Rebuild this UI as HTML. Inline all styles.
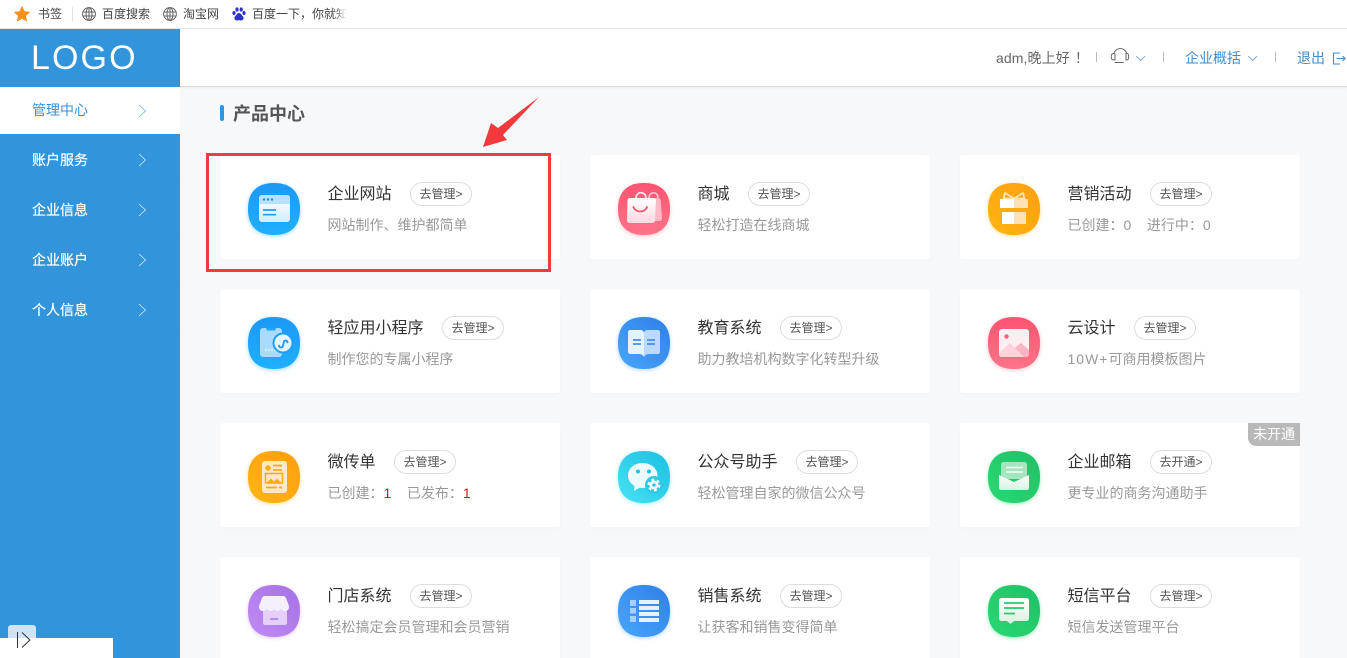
<!DOCTYPE html>
<html lang="zh">
<head>
<meta charset="utf-8">
<title>产品中心</title>
<style>
*{box-sizing:border-box;margin:0;padding:0}
html,body{width:1347px;height:658px;overflow:hidden;background:#f7f8fa}
body{position:relative;font-family:"Liberation Sans","Noto Sans CJK SC",sans-serif;color:#333}
.abs,.bm,.card,.menu,.hd{position:absolute}
.bar{position:absolute;left:0;top:0;width:1347px;height:29px;background:#fff;border-bottom:1px solid #e4e4e4}
.bm{font-size:12px;line-height:16px;top:6px;color:#444;white-space:nowrap}
.side{position:absolute;left:0;top:29px;width:180px;height:629px;background:#3295db}
.logo{position:absolute;left:31px;top:9px;font-size:34px;line-height:40px;letter-spacing:2.1px;color:#fff}
.menu{left:0;width:180px;height:50px;border-bottom:1px solid #3192d8;font-size:14px;line-height:52px;padding-left:32px;color:#fff;-webkit-text-stroke:.2px #fff}
.menu svg{position:absolute;left:138px;top:19px}
.menu.on{background:#fff;color:#3a90d4;-webkit-text-stroke:0;border:0}
.head{position:absolute;left:180px;top:29px;width:1167px;height:58px;background:#fff;border-bottom:1px solid #dcdcdc;box-shadow:0 1px 2px rgba(0,0,0,.05)}
.hd{font-size:14px;line-height:20px;top:48px;white-space:nowrap;color:#666}
.hd.b{color:#3f8ccb}
.sep{position:absolute;top:52px;width:1px;height:10px;background:#bbb}
.card{width:340px;height:104px;background:#fff;border-radius:3px;box-shadow:0 2px 6px rgba(0,0,0,.02)}
.card>svg{position:absolute;left:28px;top:28px}
.t{position:absolute;left:108px;top:27px;height:24px;display:flex;align-items:center;font-size:16px;line-height:24px;color:#333;white-space:nowrap}
.n{position:relative;left:-.5px;top:1px}
.btn{display:inline-block;margin-left:18px;width:62px;height:24px;border:1px solid #ddd;border-radius:12px;font-size:12px;line-height:23px;text-align:center;color:#555}
.s{position:absolute;left:107.500px;top:60px;font-size:14px;line-height:20px;color:#999;white-space:pre}
.s i{font-style:normal;color:#d01c10}
.tag{position:absolute;right:0;top:0;width:52px;height:23px;background:#b9b9b9;border-radius:0 0 0 8px;font-size:14px;line-height:23px;text-align:center;color:#fff}
.sb{filter:drop-shadow(0 1px 2px rgba(30,176,255,.45))}
.sr{filter:drop-shadow(0 1px 2px rgba(255,116,136,.45))}
.sy{filter:drop-shadow(0 1px 2px rgba(255,182,18,.45))}
.sn{filter:drop-shadow(0 1px 2px rgba(72,166,251,.45))}
.sc{filter:drop-shadow(0 1px 2px rgba(71,226,244,.45))}
.sg{filter:drop-shadow(0 1px 2px rgba(42,216,115,.45))}
.sp{filter:drop-shadow(0 1px 2px rgba(193,139,246,.45))}
</style>
</head>
<body>
<div class="bar"></div>
<svg class="abs" style="left:13px;top:5px" width="18" height="18" viewBox="0 0 18 18"><path d="M9 .8l2.500 5.400 5.800.7-4.300 4 1.200 5.800L9 13.800l-5.200 2.900L5 10.900.7 6.900l5.800-.7z" fill="#f5901e"/></svg>
<div class="bm" style="left:38px">书签</div>
<div class="abs" style="left:72px;top:7px;width:1px;height:15px;background:#e2e2e2"></div>
<svg class="abs" style="left:82px;top:7px" width="14" height="14" viewBox="0 0 14 14" fill="none" stroke="#666"><circle cx="7" cy="7" r="6.400"/><ellipse cx="7" cy="7" rx="3" ry="6.400"/><path d="M1 5h12M1 9h12M7 .6v12.800"/></svg>
<div class="bm" style="left:102px">百度搜索</div>
<svg class="abs" style="left:163px;top:7px" width="14" height="14" viewBox="0 0 14 14" fill="none" stroke="#666"><circle cx="7" cy="7" r="6.400"/><ellipse cx="7" cy="7" rx="3" ry="6.400"/><path d="M1 5h12M1 9h12M7 .6v12.800"/></svg>
<div class="bm" style="left:183px">淘宝网</div>
<svg class="abs" style="left:232px;top:7px" width="14" height="14" viewBox="0 0 14 14" fill="#2b32c8"><ellipse cx="2" cy="6" rx="1.600" ry="2"/><ellipse cx="5" cy="2.500" rx="1.600" ry="2.100"/><ellipse cx="9.200" cy="2.500" rx="1.600" ry="2.100"/><ellipse cx="12" cy="6" rx="1.600" ry="2"/><path d="M7 6c2 0 2.500 2 4 3.500 1.500 2 0 4-2 4-1 0-1.300-.4-2-.4s-1 .4-2 .4c-2 0-3.500-2-2-4C4.500 8 5 6 7 6z"/></svg>
<div class="bm" style="left:252px;width:96px;overflow:hidden">百度一下，你就知道</div>
<div class="abs" style="left:334px;top:5px;width:15px;height:18px;background:linear-gradient(90deg,rgba(255,255,255,0),#fff 85%)"></div>

<div class="side">
  <div class="logo">LOGO</div>
</div>
<div class="menu on" style="top:87px;height:47px;line-height:46px"><span>管理中心</span><svg style="top:17px" width="9" height="14" viewBox="0 0 9 14" fill="none" stroke="#6fb0e0" stroke-width=".8"><path d="M1 1l6.500 6L1 13"/></svg></div>
<div class="menu" style="top:134px">账户服务<svg width="9" height="14" viewBox="0 0 9 14" fill="none" stroke="#d6eaf8" stroke-width=".8"><path d="M1 1l6.500 6L1 13"/></svg></div>
<div class="menu" style="top:184px">企业信息<svg width="9" height="14" viewBox="0 0 9 14" fill="none" stroke="#d6eaf8" stroke-width=".8"><path d="M1 1l6.500 6L1 13"/></svg></div>
<div class="menu" style="top:234px">企业账户<svg width="9" height="14" viewBox="0 0 9 14" fill="none" stroke="#d6eaf8" stroke-width=".8"><path d="M1 1l6.500 6L1 13"/></svg></div>
<div class="menu" style="top:284px">个人信息<svg width="9" height="14" viewBox="0 0 9 14" fill="none" stroke="#d6eaf8" stroke-width=".8"><path d="M1 1l6.500 6L1 13"/></svg></div>
<div class="abs" style="left:8px;top:625px;width:28px;height:16px;background:#cfe3f5;border-radius:3px 3px 0 0"></div>
<div class="abs" style="left:0;top:638px;width:113px;height:20px;background:#fff"></div>
<svg class="abs" style="left:16px;top:631px" width="16" height="18" viewBox="0 0 16 18" fill="none" stroke="#222" stroke-width=".9"><path d="M1.500 1v16M6 1.500L14 9 6 16.500"/></svg>

<div class="head"></div>
<div class="hd" style="left:996px;letter-spacing:.1px">adm,晚上好<span style="margin-left:5px">！</span></div>
<div class="sep" style="left:1096px"></div>
<svg class="abs" style="left:1110px;top:46px" width="20" height="18" viewBox="0 0 20 18" fill="none" stroke="#666" stroke-width="1"><path d="M4 7.500a6.500 6.500 0 0 1 12.500-.5"/><path d="M4 7.500H3.500a2.200 2.200 0 0 0-2.200 2.200v2a2.200 2.200 0 0 0 2.200 2.200H5V8zM16 7.500h.8a1.800 1.800 0 0 1 1.800 1.800v2.800a1.800 1.800 0 0 1-1.800 1.800H16z"/><path d="M5 16.500h8.500" stroke-linecap="round"/></svg>
<svg class="abs" style="left:1135px;top:55px" width="11" height="7" viewBox="0 0 11 7" fill="none" stroke="#7fa9cc" stroke-width=".9"><path d="M1 1l4.500 4.500L10 1"/></svg>
<div class="sep" style="left:1163px"></div>
<div class="hd b" style="left:1185px">企业概括</div>
<svg class="abs" style="left:1247px;top:55px" width="11" height="7" viewBox="0 0 11 7" fill="none" stroke="#7fa9cc" stroke-width=".9"><path d="M1 1l4.500 4.500L10 1"/></svg>
<div class="sep" style="left:1275px"></div>
<div class="hd b" style="left:1297px">退出</div>
<svg class="abs" style="left:1332px;top:52px" width="14" height="13" viewBox="0 0 14 13" fill="none" stroke="#3f8ccb" stroke-width="1.100"><path d="M8 1H1.500v11H8M4.500 6.500H13M10.500 4l2.600 2.500L10.500 9"/></svg>

<div class="abs" style="left:220px;top:105px;width:4px;height:16px;background:#3295db;border-radius:2px"></div>
<div class="abs" style="left:233px;top:101px;font-size:18px;line-height:26px;font-weight:bold;color:#555">产品中心</div>

<svg width="0" height="0" style="position:absolute">
<defs>
<linearGradient id="gb" x1="0" y1="0" x2="0" y2="1"><stop offset="0" stop-color="#1c98f5"/><stop offset="1" stop-color="#1eb0ff"/></linearGradient>
<linearGradient id="gr" x1="0" y1="0" x2="0" y2="1"><stop offset="0" stop-color="#fb5470"/><stop offset="1" stop-color="#ff7488"/></linearGradient>
<linearGradient id="gy" x1="1" y1="0" x2="0" y2="1"><stop offset="0" stop-color="#fd9e10"/><stop offset="1" stop-color="#ffb612"/></linearGradient>
<linearGradient id="gn" x1="1" y1="0" x2="0" y2="1"><stop offset="0" stop-color="#2f7fe6"/><stop offset="1" stop-color="#48a6fb"/></linearGradient>
<linearGradient id="gc" x1="1" y1="0" x2="0" y2="1"><stop offset="0" stop-color="#1cc0e2"/><stop offset="1" stop-color="#47e2f4"/></linearGradient>
<linearGradient id="gg" x1="1" y1="0" x2="0" y2="1"><stop offset="0" stop-color="#1fc066"/><stop offset="1" stop-color="#2ad873"/></linearGradient>
<linearGradient id="gp" x1="1" y1="0" x2="0" y2="1"><stop offset="0" stop-color="#a572e2"/><stop offset="1" stop-color="#c18bf6"/></linearGradient>
<linearGradient id="wb" x1="0" y1="0" x2="0" y2="1"><stop offset="0" stop-color="#fff"/><stop offset="1" stop-color="#d6ecff"/></linearGradient>
<linearGradient id="wr" x1="0" y1="0" x2="0" y2="1"><stop offset="0" stop-color="#fff"/><stop offset="1" stop-color="#fcd9e0"/></linearGradient>
<linearGradient id="wg" x1="0" y1="0" x2="0" y2="1"><stop offset="0" stop-color="#fff"/><stop offset="1" stop-color="#d5f3e1"/></linearGradient>
<path id="sq" d="M26 0C43 0 52 9 52 26C52 43 43 52 26 52C9 52 0 43 0 26C0 9 9 0 26 0Z"/>
</defs>
</svg>

<!-- Row 1 -->
<div class="card" style="left:220px;top:155px">
  <svg width="52" height="52" viewBox="0 0 52 52" overflow="visible"><use href="#sq" fill="url(#gb)" class="sb"/><rect x="11" y="12" width="31" height="27" rx="3" fill="url(#wb)"/><path d="M14 12h25a3 3 0 0 1 3 3v6H11v-6a3 3 0 0 1 3-3z" fill="#b9e0ff"/><circle cx="16" cy="16.500" r="1.200" fill="#1c8fe8"/><circle cx="20" cy="16.500" r="1.200" fill="#1c8fe8"/><circle cx="24" cy="16.500" r="1.200" fill="#1c8fe8"/><path d="M15 27h13M15 31.700h13" stroke="#1e9cf5" stroke-width="1.700"/></svg>
  <div class="t"><span class="n">企业网站</span><span class="btn">去管理&gt;</span></div>
  <div class="s">网站制作、维护都简单</div>
</div>
<div class="card" style="left:590px;top:155px">
  <svg width="52" height="52" viewBox="0 0 52 52" overflow="visible"><use href="#sq" fill="url(#gr)" class="sr"/><path d="M30 15h10c1.500 0 2.500 1 2.700 2.500L44 35c0 2-1 3-3 3H34z" fill="#fdb9c5"/><path d="M31 15c0-7 9-7 9 0" fill="none" stroke="#fdc9d2" stroke-width="1.500"/><path d="M11.500 15h24c1.500 0 2.500 1 2.500 2.500L37 37c0 2-1 3-3 3H12c-2 0-3-1-3-3l.5-19.500c0-1.500 1-2.500 2-2.500z" fill="url(#wr)"/><path d="M18 15c0-7 10-7 10 0" fill="none" stroke="#fde6ea" stroke-width="1.700"/><path d="M15.500 24c2 6 11.500 6 13.500 0" fill="none" stroke="#f8526c" stroke-width="1.800" stroke-linecap="round"/></svg>
  <div class="t"><span class="n">商城</span><span class="btn">去管理&gt;</span></div>
  <div class="s">轻松打造在线商城</div>
</div>
<div class="card" style="left:960px;top:155px">
  <svg width="52" height="52" viewBox="0 0 52 52" overflow="visible"><use href="#sq" fill="url(#gy)" class="sy"/><path d="M26 15.500L17 10l-1.500 5.500zM26 15.500L35 10l1.500 5.500z" fill="none" stroke="#ffe2b0" stroke-width="1.800" stroke-linejoin="round"/><rect x="12" y="16" width="14" height="9" fill="#fff"/><rect x="26" y="16" width="14" height="9" fill="#ffe2b3"/><rect x="14" y="29" width="12" height="12" fill="#fff"/><rect x="26" y="29" width="12" height="12" fill="#ffe2b3"/></svg>
  <div class="t"><span class="n">营销活动</span><span class="btn">去管理&gt;</span></div>
  <div class="s">已创建：0    进行中：0</div>
</div>

<!-- Row 2 -->
<div class="card" style="left:220px;top:289px">
  <svg width="52" height="52" viewBox="0 0 52 52" overflow="visible"><use href="#sq" fill="url(#gb)" class="sb"/><rect x="12" y="11" width="22" height="29" rx="3" fill="#a8dbff"/><path d="M18 11h10l-1 2.500h-8z" fill="#1ea5fb"/><path d="M17 33h12" stroke="#d4eeff" stroke-width="2" stroke-dasharray="2 1"/><circle cx="35" cy="26" r="10.500" fill="#1ea0f7"/><circle cx="35" cy="26" r="8.500" fill="#e5f4ff"/><path d="M31 28.500c0 2.500 3.500 2.500 4 .5l.8-4c.5-2 3.700-2 3.700.5" fill="none" stroke="#1e9cf5" stroke-width="1.800" stroke-linecap="round"/></svg>
  <div class="t"><span class="n">轻应用小程序</span><span class="btn">去管理&gt;</span></div>
  <div class="s">制作您的专属小程序</div>
</div>
<div class="card" style="left:590px;top:289px">
  <svg width="52" height="52" viewBox="0 0 52 52" overflow="visible"><use href="#sq" fill="url(#gn)" class="sn"/><path d="M12 13h10c2 0 4 1 4 3v24c-1-2-3-3-5-3H12c-1 0-2-1-2-2V15c0-1 1-2 2-2z" fill="#e6f1ff"/><path d="M40 13H30c-2 0-4 1-4 3v24c1-2 3-3 5-3h9c1 0 2-1 2-2V15c0-1-1-2-2-2z" fill="#bcdaff"/><path d="M15 23h8M15 27h8M29 23h8M29 27h8" stroke="#3f90ef" stroke-width="1.700"/></svg>
  <div class="t"><span class="n">教育系统</span><span class="btn">去管理&gt;</span></div>
  <div class="s">助力教培机构数字化转型升级</div>
</div>
<div class="card" style="left:960px;top:289px">
  <svg width="52" height="52" viewBox="0 0 52 52" overflow="visible"><use href="#sq" fill="url(#gr)" class="sr"/><rect x="11" y="12" width="30" height="28" rx="3" fill="#fdeef1"/><circle cx="18.500" cy="19.500" r="2.200" fill="#f8627a"/><path d="M24 33l9-7 8 7v4c0 2-1 3-3 3H26z" fill="#fbb5c2"/><path d="M11 36l11-10 14 14H14c-2 0-3-1-3-3z" fill="#fcd3db"/></svg>
  <div class="t"><span class="n">云设计</span><span class="btn">去管理&gt;</span></div>
  <div class="s"><span style="letter-spacing:1px">10W+</span>可商用模板图片</div>
</div>

<!-- Row 3 -->
<div class="card" style="left:220px;top:423px">
  <svg width="52" height="52" viewBox="0 0 52 52" overflow="visible"><use href="#sq" fill="url(#gy)" class="sy"/><rect x="14" y="10" width="25" height="32" rx="3" fill="#ffe9c6"/><circle cx="20" cy="17" r="2.800" fill="#ffa912"/><path d="M25 14.500h9M25 19h9M18 36.500h11M31 36.500h3" stroke="#ffa912" stroke-width="1.700"/><rect x="17.500" y="22.500" width="17" height="9.500" fill="none" stroke="#ffa912" stroke-width="1.500"/><path d="M19 31.500l4-4 3 3 3-3 4 4z" fill="#ffa912"/></svg>
  <div class="t"><span class="n">微传单</span><span class="btn">去管理&gt;</span></div>
  <div class="s">已创建：<i>1</i>    已发布：<i>1</i></div>
</div>
<div class="card" style="left:590px;top:423px">
  <svg width="52" height="52" viewBox="0 0 52 52" overflow="visible"><use href="#sq" fill="url(#gc)" class="sc"/><path d="M24.500 12c8.500 0 15 5.500 15 12.500S33 37 24.500 37c-1 0-2 0-3-.2L16 40l.5-5C12.500 32.500 10 29 10 24.500 10 17.500 16 12 24.500 12z" fill="#eefbfe"/><circle cx="20" cy="20.500" r="2" fill="#1fc3e0"/><circle cx="31" cy="20.500" r="2" fill="#1fc3e0"/><circle cx="36" cy="34" r="9" fill="#2dc9e6"/><circle cx="36" cy="34" r="4.500" fill="#fff"/><circle cx="36" cy="34" r="5.500" fill="none" stroke="#fff" stroke-width="2" stroke-dasharray="2.880 2.880"/><circle cx="36" cy="34" r="1.800" fill="#2dc9e6"/></svg>
  <div class="t"><span class="n">公众号助手</span><span class="btn">去管理&gt;</span></div>
  <div class="s">轻松管理自家的微信公众号</div>
</div>
<div class="card" style="left:960px;top:423px">
  <svg width="52" height="52" viewBox="0 0 52 52" overflow="visible"><use href="#sq" fill="url(#gg)" class="sg"/><path d="M16 11h20c2 0 3 1 3 3v14H13V14c0-2 1-3 3-3z" fill="#a4e6bf"/><path d="M18 16.500h17M18 21h17" stroke="#e9fbf0" stroke-width="1.700"/><path d="M11 24l15 7 15-7v13c0 1-1 2-2 2H13c-1 0-2-1-2-2z" fill="url(#wg)"/></svg>
  <div class="t"><span class="n">企业邮箱</span><span class="btn">去开通&gt;</span></div>
  <div class="s">更专业的商务沟通助手</div>
  <div class="tag">未开通</div>
</div>

<!-- Row 4 -->
<div class="card" style="left:220px;top:557px">
  <svg width="52" height="52" viewBox="0 0 52 52" overflow="visible"><use href="#sq" fill="url(#gp)" class="sp"/><path d="M15 24h24v14c0 1-1 2-2 2H17c-1 0-2-1-2-2z" fill="#e4cffa"/><path d="M22 34h8" stroke="#a875e4" stroke-width="1.500"/><path d="M17 11h18c1.500 0 2.500 1 3 2l3 8c.5 3-1.500 5-4 5-1.500 0-3-1-4-2-1 1-2.500 2-4 2s-2.500-1-3-2c-.5 1-1.500 2-3 2s-3-1-4-2c-1 1-2.500 2-4 2-2.500 0-4.500-2-4-5l3-8c.5-1 1.500-2 3-2z" fill="#f6effe"/></svg>
  <div class="t"><span class="n">门店系统</span><span class="btn">去管理&gt;</span></div>
  <div class="s">轻松搞定会员管理和会员营销</div>
</div>
<div class="card" style="left:590px;top:557px">
  <svg width="52" height="52" viewBox="0 0 52 52" overflow="visible"><use href="#sq" fill="url(#gn)" class="sn"/><path d="M12 15h6v6h-6zM12 23h6v5.500h-6zM12 31h6v6h-6z" fill="#a8cffa"/><path d="M21 15h20v4H21zM21 21h20v4H21zM21 27h20v4H21zM21 33h20v4H21z" fill="#e8f2ff"/></svg>
  <div class="t"><span class="n">销售系统</span><span class="btn">去管理&gt;</span></div>
  <div class="s">让获客和销售变得简单</div>
</div>
<div class="card" style="left:960px;top:557px">
  <svg width="52" height="52" viewBox="0 0 52 52" overflow="visible"><use href="#sq" fill="url(#gg)" class="sg"/><path d="M14 13h24c2 0 3 1 3 3v17c0 2-1 3-3 3H26l-3.500 3-3.500-3h-5c-2 0-3-1-3-3V16c0-2 1-3 3-3z" fill="url(#wg)"/><path d="M16 18h20M16 23h20M16 28.500h11" stroke="#27c96c" stroke-width="1.800"/></svg>
  <div class="t"><span class="n">短信平台</span><span class="btn">去管理&gt;</span></div>
  <div class="s">短信发送管理平台</div>
</div>

<div class="abs" style="left:206px;top:153px;width:345px;height:119px;border:3px solid #ed3b3f"></div>
<svg class="abs" style="left:480px;top:94px" width="62" height="56" viewBox="480 94 62 56"><path d="M483 147L491 123 498 128 539 97 503 135 507 140z" fill="#f13a3c"/></svg>
</body>
</html>
